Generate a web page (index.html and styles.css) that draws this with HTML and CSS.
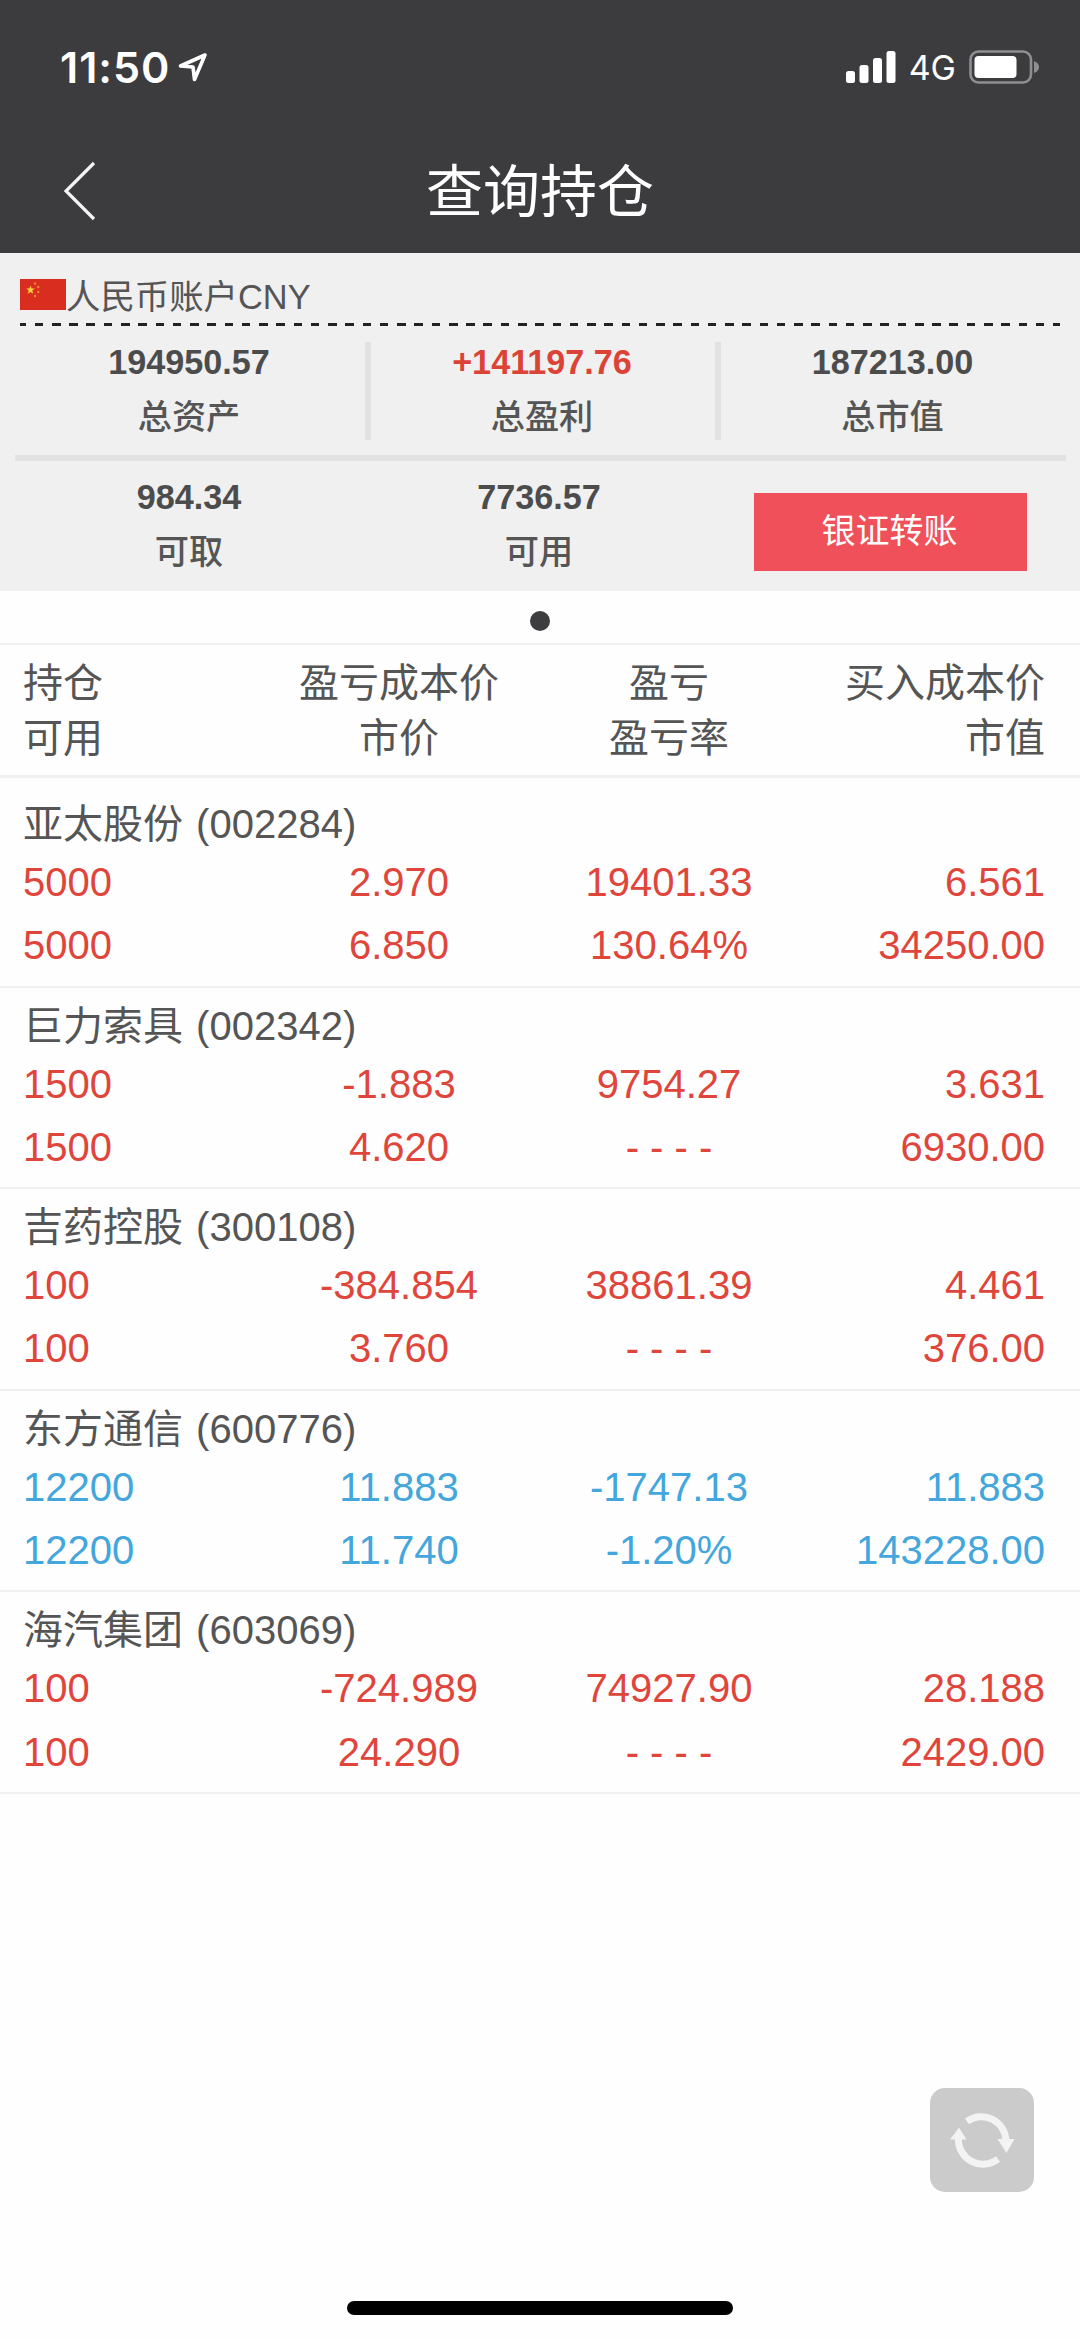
FILE: index.html
```
<!DOCTYPE html>
<html lang="zh-CN">
<head>
    <meta charset="UTF-8">
    <meta name="viewport" content="width=device-width, initial-scale=1.0">
    <title>查询持仓</title>
    <link rel="stylesheet" href="styles.css">
</head>
<body>

<header class="header">
    <div class="status-bar">
        <div class="status-left">
            <span class="time">11:50</span>
            <svg class="location" width="30" height="30" viewBox="0 0 30 30">
                <path d="M27 3 L2.500 14 L15 15 L16.500 27.500 Z" fill="none" stroke="#fff" stroke-width="3.6" stroke-linejoin="round"/>
            </svg>
        </div>
        <div class="status-right">
            <svg class="signal" width="50" height="32" viewBox="0 0 50 32">
                <rect x="0" y="20" width="9" height="12" rx="2.5" fill="#fff"/>
                <rect x="13.5" y="14" width="9" height="18" rx="2.5" fill="#fff"/>
                <rect x="27" y="7" width="9" height="25" rx="2.5" fill="#fff"/>
                <rect x="40.5" y="0" width="9" height="32" rx="2.5" fill="#fff"/>
            </svg>
            <span class="network">4G</span>
            <svg class="battery" width="71" height="34" viewBox="0 0 71 34">
                <rect x="1.5" y="1.5" width="60.5" height="31" rx="8" fill="none" stroke="#8f8f91" stroke-width="2.6"/>
                <rect x="5.5" y="6" width="42" height="22" rx="4" fill="#fff"/>
                <path d="M65 11 Q70 13 70 17 Q70 21 65 23 Z" fill="#8f8f91"/>
            </svg>
        </div>
    </div>
    <nav class="nav-bar">
        <button class="back" type="button" aria-label="返回">
            <svg width="34" height="60" viewBox="0 0 34 60">
                <path d="M31 2 L3 30 L31 58" fill="none" stroke="#f4f4f4" stroke-width="3.2"/>
            </svg>
        </button>
        <h1>查询持仓</h1>
    </nav>
</header>

<!-- 账户资产 -->
<section class="account">
    <div class="account-title">
        <svg class="flag" width="46" height="31" viewBox="0 0 46 31">
            <rect width="46" height="31" fill="#d92d20"/>
            <path d="M10.5 6.5 l1.1 3 3.2 .1 -2.5 2 .9 3.1 -2.7 -1.8 -2.7 1.8 .9 -3.1 -2.5 -2 3.2 -.1z" fill="#fbd23c"/>
            <g fill="#f08a2c">
                <circle cx="15" cy="4.5" r="1.2"/>
                <circle cx="18.3" cy="8" r="1.2"/>
                <circle cx="18.3" cy="13" r="1.2"/>
                <circle cx="15" cy="17" r="1.2"/>
            </g>
        </svg>
        <span>人民币账户CNY</span>
    </div>
    <div class="dashed"></div>

    <div class="summary">
        <div class="cell">
            <b>194950.57</b>
            <span>总资产</span>
        </div>
        <div class="cell">
            <b class="profit">+141197.76</b>
            <span>总盈利</span>
        </div>
        <div class="cell">
            <b>187213.00</b>
            <span>总市值</span>
        </div>
    </div>
    <div class="summary second">
        <div class="cell">
            <b>984.34</b>
            <span>可取</span>
        </div>
        <div class="cell">
            <b>7736.57</b>
            <span>可用</span>
        </div>
        <button class="transfer" type="button">银证转账</button>
    </div>
</section>

<div class="pager"><i class="dot"></i></div>

<!-- 表头 -->
<div class="row table-head">
    <div>持仓<br>可用</div>
    <div>盈亏成本价<br>市价</div>
    <div>盈亏<br>盈亏率</div>
    <div>买入成本价<br>市值</div>
</div>

<!-- 持仓列表 -->
<main class="list">
    <article class="stock up">
        <h2>亚太股份 (002284)</h2>
        <div class="row">
            <div>5000<br>5000</div>
            <div>2.970<br>6.850</div>
            <div>19401.33<br>130.64%</div>
            <div>6.561<br>34250.00</div>
        </div>
    </article>
    <article class="stock up">
        <h2>巨力索具 (002342)</h2>
        <div class="row">
            <div>1500<br>1500</div>
            <div>-1.883<br>4.620</div>
            <div>9754.27<br>- - - -</div>
            <div>3.631<br>6930.00</div>
        </div>
    </article>
    <article class="stock up">
        <h2>吉药控股 (300108)</h2>
        <div class="row">
            <div>100<br>100</div>
            <div>-384.854<br>3.760</div>
            <div>38861.39<br>- - - -</div>
            <div>4.461<br>376.00</div>
        </div>
    </article>
    <article class="stock down">
        <h2>东方通信 (600776)</h2>
        <div class="row">
            <div>12200<br>12200</div>
            <div>11.883<br>11.740</div>
            <div>-1747.13<br>-1.20%</div>
            <div>11.883<br>143228.00</div>
        </div>
    </article>
    <article class="stock up">
        <h2>海汽集团 (603069)</h2>
        <div class="row">
            <div>100<br>100</div>
            <div>-724.989<br>24.290</div>
            <div>74927.90<br>- - - -</div>
            <div>28.188<br>2429.00</div>
        </div>
    </article>
</main>

<button class="refresh" type="button" aria-label="刷新">
    <svg width="66" height="60" viewBox="0 0 66 60">
        <g fill="none" stroke="#f3f3f3" stroke-width="7">
            <path d="M18 11.500 A24.500 24.500 0 0 1 57 31"/>
            <path d="M49 49 A24.500 24.500 0 0 1 9.500 28"/>
        </g>
        <path d="M48.500 29 L65.500 29 L57.500 43 Z" fill="#f3f3f3"/>
        <path d="M1 29.500 L17.500 29.500 L10 17.500 Z" fill="#f3f3f3"/>
    </svg>
</button>
<div class="home-indicator"></div>

</body>
</html>
```
FILE: styles.css
```
* {
    box-sizing: border-box;
}

body {
    margin: 0;
    height: 2339px;
    background: #fefefe;
    color: #555;
    font-family: "Liberation Sans", "Noto Sans CJK SC", sans-serif;
    overflow: hidden;
}

button {
    border: none;
    padding: 0;
    font-family: inherit;
    cursor: pointer;
}

/* 顶部 */
.header {
    height: 253px;
    background: #3c3c3e;
    color: #fff;
}

.status-bar {
    display: flex;
    justify-content: space-between;
    align-items: center;
    height: 133px;
    padding: 0 40px 0 60px;
}

.status-left, .status-right {
    display: flex;
    align-items: center;
}

.time {
    font-family: Inter, sans-serif;
    font-size: 43px;
    font-weight: 600;
    letter-spacing: 1px;
}

.location {
    margin-left: 8px;
}

.network {
    margin: 2px 13px 0;
    font-family: Inter, sans-serif;
    font-size: 34px;
}

.nav-bar {
    display: grid;
    grid-template-columns: 200px 1fr 200px;
    align-items: center;
    height: 116px;
}

.back {
    display: flex;
    padding-left: 63px;
    background: none;
}

h1 {
    margin: 0;
    padding-top: 2px;
    font-size: 57px;
    font-weight: 400;
    line-height: 80px;
    text-align: center;
}

/* 账户资产 */
.account {
    height: 338px;
    padding: 18px 14px 0 15px;
    background: #f0f0f0;
}

.account-title {
    display: flex;
    align-items: center;
    height: 52px;
    padding-left: 5px;
    font-size: 34.4px;
    line-height: 50px;
}

.flag {
    margin-bottom: 5px;
}

.dashed {
    height: 3px;
    margin: 0 6px 0 5px;
    background: repeating-linear-gradient(to right, #222 0 6px, transparent 6px 14.7px, #222 14.7px 17.26px);
}

.summary {
    display: grid;
    grid-template-columns: 356px 350px 1fr;
    height: 135px;
    padding: 16px 0 0;
    border-bottom: 6px solid #e2e2e2;
}

.summary.second {
    grid-template-columns: 348px 352px 1fr;
    height: 130px;
    padding-top: 16px;
    border: none;
}

.cell {
    display: flex;
    flex-direction: column;
    align-items: center;
    height: 98px;
    font-size: 34.2px;
    font-weight: 500;
}

.summary:not(.second) .cell:not(:last-child) {
    padding-right: 2px;
    border-right: 6px solid #e2e2e2;
}

.summary:not(.second) .cell:last-child {
    padding-right: 2px;
}

.cell b {
    line-height: 40px;
    color: #4c4c4c;
}

.cell span {
    margin-top: 10px;
    line-height: 50px;
}

.cell .profit {
    color: #dc4337;
}

.transfer {
    width: 273px;
    height: 78px;
    margin: 16px 0 0 39px;
    padding: 0 2px 8px 0;
    background: #ef5059;
    color: #fff;
    font-size: 34px;
}

.pager {
    display: flex;
    justify-content: center;
    align-items: center;
    height: 52px;
    padding-top: 8px;
}

.dot {
    width: 20px;
    height: 20px;
    border-radius: 50%;
    background: #3e3e40;
}

/* 表格 */
.row {
    display: grid;
    grid-template-columns: 241px 270px 270px 1fr;
    padding: 0 35px 0 23px;
    font-size: 40px;
    text-align: center;
}

.row div:first-child {
    text-align: left;
}

.row div:last-child {
    text-align: right;
}

.table-head {
    height: 135px;
    padding-top: 11px;
    border-top: 2px solid #f0f0f0;
    border-bottom: 3px solid #f0f0f0;
    line-height: 55px;
}

.list {
    padding-top: 8px;
}

.stock {
    height: 201.6px;
    padding-top: 12px;
    border-bottom: 2px solid #f0f0f0;
}

.stock h2 {
    margin: 0;
    padding-left: 23px;
    font-size: 40px;
    font-weight: 400;
    line-height: 53px;
    word-spacing: 2px;
}

.stock .row {
    line-height: 63.3px;
}

.up .row {
    color: #e0453b;
}

.down .row {
    color: #43a6dc;
}

/* 浮动按钮 */
.refresh {
    position: absolute;
    left: 930px;
    top: 2088px;
    display: flex;
    justify-content: center;
    align-items: center;
    width: 104px;
    height: 104px;
    border-radius: 15px;
    background: #cbcbcb;
}

.home-indicator {
    position: absolute;
    left: 347px;
    top: 2301px;
    width: 386px;
    height: 14px;
    border-radius: 7px;
    background: #000;
}
```
